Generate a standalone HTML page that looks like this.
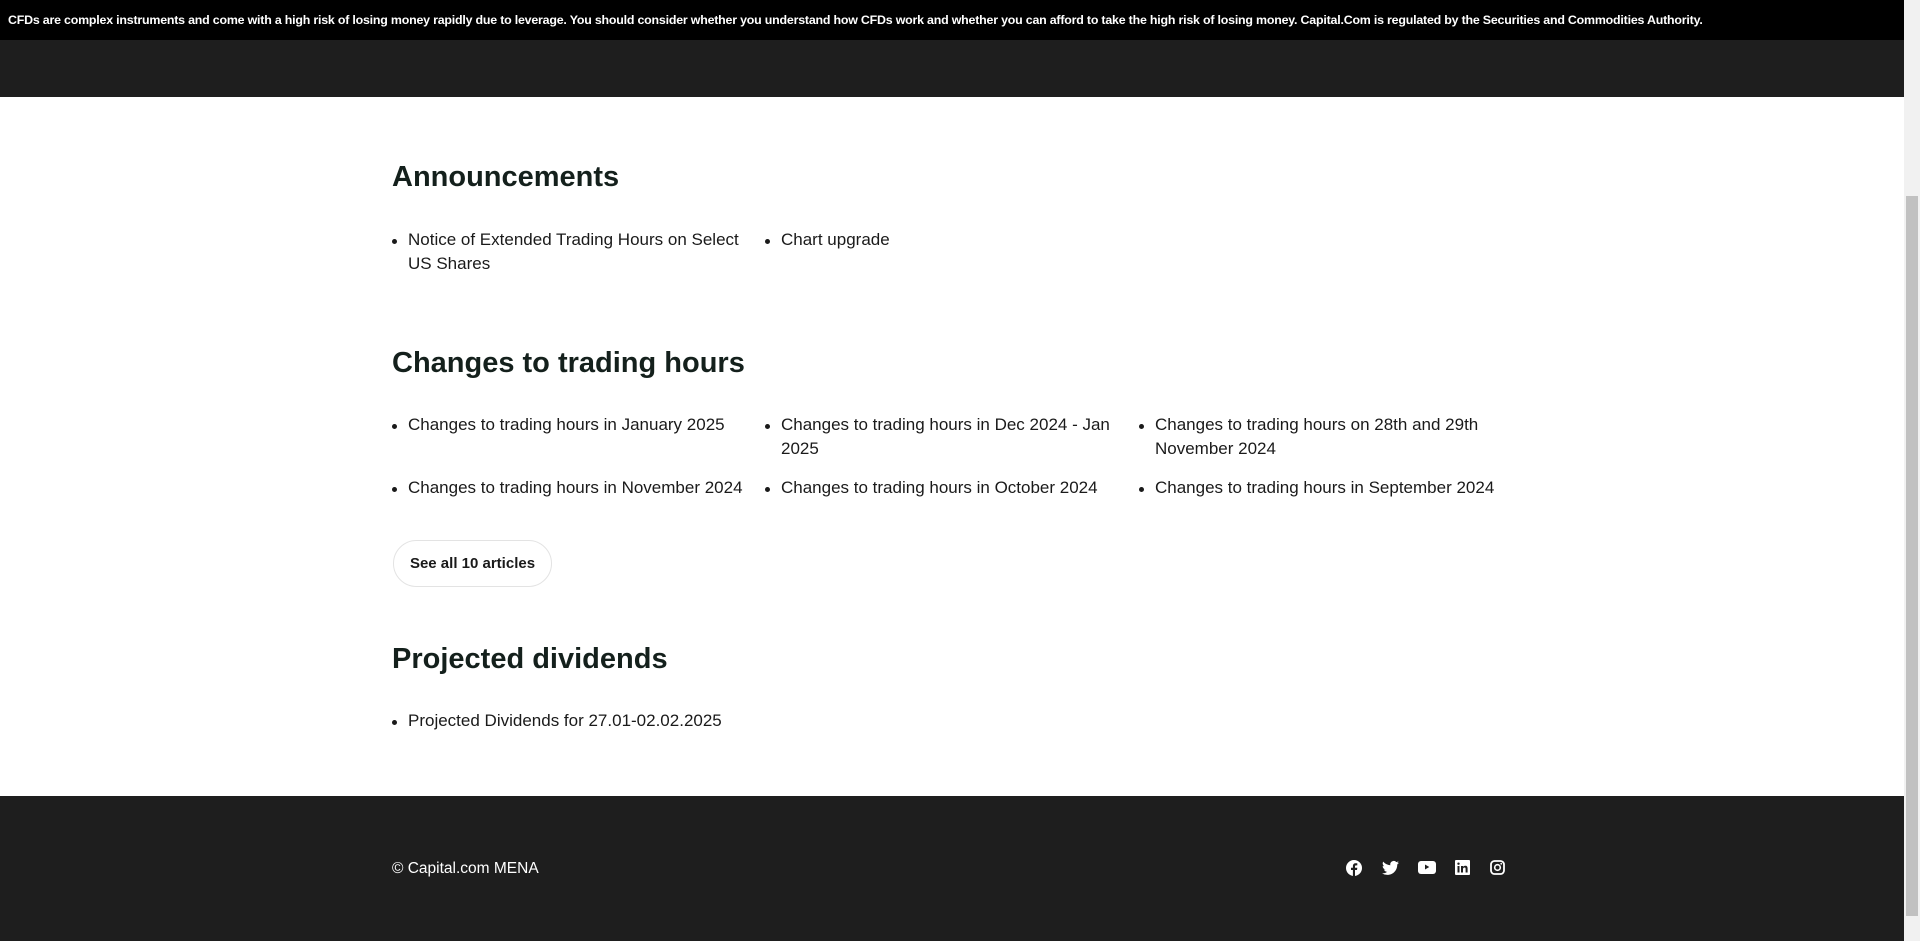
<!DOCTYPE html>
<html><head><meta charset="utf-8"><style>
*{margin:0;padding:0;box-sizing:border-box}
html,body{width:1920px;height:941px;overflow:hidden;background:#fff;font-family:"Liberation Sans",sans-serif;color:#1a1a1a}
.top{position:absolute;left:0;top:0;width:1904px;height:40px;background:#000;color:#fff;font-size:12.4px;font-weight:bold;line-height:40px;padding-left:8px;white-space:nowrap;letter-spacing:-0.2px;}
.hdr{position:absolute;left:0;top:40px;width:1904px;height:57px;background:#1e1e1e}
.sb{position:absolute;left:1904px;top:0;width:16px;height:941px;background:#f1f1f1}
.sb div{position:absolute;left:2px;top:196px;width:12px;height:720px;background:#c1c1c1}
h2{position:absolute;left:392px;font-size:29px;font-weight:bold;color:#14201c;line-height:36px}
.it{position:absolute;font-size:17px;line-height:24px;width:355px;color:#1a1a1a}
.it:before{content:"";position:absolute;left:-16px;top:11px;width:5px;height:5px;border-radius:50%;background:#1a1a1a}
.btn{position:absolute;left:393px;top:540px;width:159px;height:47px;border:1px solid #e3e3e3;border-radius:24px;font-size:15px;font-weight:bold;line-height:45px;text-align:center}
.ft{position:absolute;left:0;top:796px;width:1904px;height:145px;background:#1e1e1e}
.ft .c{position:absolute;left:392px;top:64px;color:#fff;font-size:15.5px}
.ft svg{position:absolute;top:64px}
</style></head><body>
<div class="top">CFDs are complex instruments and come with a high risk of losing money rapidly due to leverage. You should consider whether you understand how CFDs work and whether you can afford to take the high risk of losing money. Capital.Com is regulated by the Securities and Commodities Authority.</div>
<div class="hdr"></div>
<div class="sb"><div></div></div>
<h2 style="top:159px">Announcements</h2>
<div class="it" style="left:408px;top:228px">Notice of Extended Trading Hours on Select US Shares</div>
<div class="it" style="left:781px;top:228px">Chart upgrade</div>
<h2 style="top:345px">Changes to trading hours</h2>
<div class="it" style="left:408px;top:413px">Changes to trading hours in January 2025</div>
<div class="it" style="left:781px;top:413px">Changes to trading hours in Dec 2024 - Jan 2025</div>
<div class="it" style="left:1155px;top:413px">Changes to trading hours on 28th and 29th November 2024</div>
<div class="it" style="left:408px;top:476px;width:372px">Changes to trading hours in November 2024</div>
<div class="it" style="left:781px;top:476px">Changes to trading hours in October 2024</div>
<div class="it" style="left:1155px;top:476px;width:372px">Changes to trading hours in September 2024</div>
<div class="btn">See all 10 articles</div>
<h2 style="top:641px">Projected dividends</h2>
<div class="it" style="left:408px;top:709px">Projected Dividends for 27.01-02.02.2025</div>
<div class="ft">
<div class="c">© Capital.com MENA</div>
<svg style="left:1346px" width="16" height="16" viewBox="0 0 16 16"><circle cx="8" cy="8" r="8" fill="#fff"/><path d="M9 16V10h2l.3-2.3H9V6.4c0-.6.2-1 1-1h1.3V3.3C11 3.3 10.4 3.2 9.7 3.2 8 3.2 6.9 4.2 6.9 6v1.7H5V10h1.9v6z" fill="#1e1e1e"/></svg>
<svg style="left:1382px" width="17" height="16" viewBox="0 0 24 20"><path d="M24 2.4a10 10 0 0 1-2.8.8A5 5 0 0 0 23.3.5a10 10 0 0 1-3.1 1.2A4.9 4.9 0 0 0 11.8 6.1 14 14 0 0 1 1.7 1 4.9 4.9 0 0 0 3.2 7.6 4.9 4.9 0 0 1 1 7v.1a4.9 4.9 0 0 0 3.9 4.8 5 5 0 0 1-2.2.1 4.9 4.9 0 0 0 4.6 3.4A9.9 9.9 0 0 1 0 17.5 14 14 0 0 0 7.5 19.7c9 0 14-7.5 14-14v-.6A10 10 0 0 0 24 2.4z" fill="#fff"/></svg>
<svg style="left:1418px" width="18" height="14" viewBox="0 0 18 14"><rect width="18" height="13" y="1" rx="3" fill="#fff"/><path d="M7 4.5v5l4.3-2.5z" fill="#1e1e1e"/></svg>
<svg style="left:1455px" width="15" height="15" viewBox="0 0 15 15"><rect width="15" height="15" rx="1" fill="#fff"/><rect x="2.5" y="6" width="2" height="6.5" fill="#1e1e1e"/><circle cx="3.5" cy="3.7" r="1.2" fill="#1e1e1e"/><path d="M6 6h2v1c.5-.8 1.3-1.2 2.3-1.2 1.7 0 2.3 1 2.3 2.8v3.9h-2V9c0-.9-.2-1.5-1-1.5S8 8.1 8 9v3.5H6z" fill="#1e1e1e"/></svg>
<svg style="left:1490px" width="15" height="15" viewBox="0 0 15 15"><rect x="1" y="1" width="13" height="13" rx="3.5" fill="none" stroke="#fff" stroke-width="1.8"/><circle cx="7.5" cy="7.5" r="2.8" fill="none" stroke="#fff" stroke-width="1.6"/><circle cx="11.2" cy="3.8" r=".9" fill="#fff"/></svg>
</div>
</body></html>
